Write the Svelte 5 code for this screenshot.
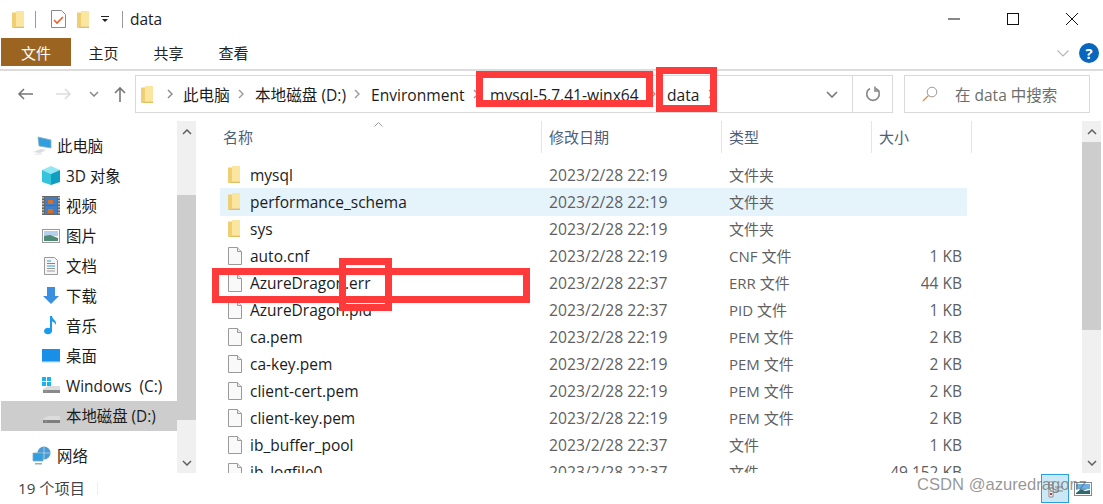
<script>
  const nav = [
    { icon: 'pc', label: '此电脑', indent: 31 },
    { icon: 'cube', label: '3D 对象', indent: 40 },
    { icon: 'film', label: '视频', indent: 40 },
    { icon: 'pic', label: '图片', indent: 40 },
    { icon: 'doc', label: '文档', indent: 40 },
    { icon: 'down', label: '下载', indent: 40 },
    { icon: 'music', label: '音乐', indent: 40 },
    { icon: 'desk', label: '桌面', indent: 40 },
    { icon: 'win', label: 'Windows  (C:)', indent: 40 },
    { icon: 'disk', label: '本地磁盘 (D:)', indent: 40, selected: true },
    { icon: 'net', label: '网络', indent: 31, gap: true }
  ];
  const files = [
    ['folder', 'mysql', '2023/2/28 22:19', '文件夹', ''],
    ['folder', 'performance_schema', '2023/2/28 22:19', '文件夹', ''],
    ['folder', 'sys', '2023/2/28 22:19', '文件夹', ''],
    ['file', 'auto.cnf', '2023/2/28 22:19', 'CNF 文件', '1 KB'],
    ['file', 'AzureDragon.err', '2023/2/28 22:37', 'ERR 文件', '44 KB'],
    ['file', 'AzureDragon.pid', '2023/2/28 22:37', 'PID 文件', '1 KB'],
    ['file', 'ca.pem', '2023/2/28 22:19', 'PEM 文件', '2 KB'],
    ['file', 'ca-key.pem', '2023/2/28 22:19', 'PEM 文件', '2 KB'],
    ['file', 'client-cert.pem', '2023/2/28 22:19', 'PEM 文件', '2 KB'],
    ['file', 'client-key.pem', '2023/2/28 22:19', 'PEM 文件', '2 KB'],
    ['file', 'ib_buffer_pool', '2023/2/28 22:37', '文件', '1 KB'],
    ['file', 'ib_logfile0', '2023/2/28 22:37', '文件', '49,152 KB']
  ];
  const crumbs = [
    { t: '此电脑', w: 72 },
    { t: '本地磁盘 (D:)', w: 116 },
    { t: 'Environment', w: 119 },
    { t: 'mysql-5.7.41-winx64', w: 177 },
    { t: 'data', w: 58 }
  ];
</script>

{#snippet folder()}
  <svg class="fold" viewBox="0 0 12 17">
    <path d="M0 1.500h4v14l-4 1.500z" fill="#f0cf72"/>
    <path d="M4 0h8v15.500H4z" fill="#fbe6a0"/>
    <path d="M0 17l4-1.500h8V17z" fill="#e3bd60"/>
  </svg>
{/snippet}

{#snippet file()}
  <svg class="doc" viewBox="0 0 14 18">
    <path d="M.5.500h9l4 4v13H.5z" fill="#f9f9f9" stroke="#9a9a9a"/>
    <path d="M9.500.500v4h4" fill="#e8e8e8" stroke="#9a9a9a"/>
  </svg>
{/snippet}

{#snippet navIcon(name)}
  <svg class="ic20" viewBox="0 0 20 20">
    {#if name === 'pc'}
      <path d="M6 1l13 3v8L7 10z" fill="#2f9fe0" stroke="#8faec2" stroke-width=".8"/>
      <path d="M1 16l8-3 5 1-6 3z" fill="#d8dde0"/>
      <path d="M2 18l7-1 2 1-6 1z" fill="#e6e8ea"/>
    {:else if name === 'cube'}
      <path d="M1 4l9-4 9 4-9 4z" fill="#8fe8f2"/>
      <path d="M1 4l9 4v11l-9-3z" fill="#35c4dc"/>
      <path d="M19 4l-9 4v11l9-3z" fill="#0f9fc0"/>
    {:else if name === 'film'}
      <rect x="1" y="0" width="18" height="19" fill="#666"/>
      <path d="M2 1v17M18 1v17" stroke="#ddd" stroke-width="1.400" stroke-dasharray="1.500 1.500"/>
      <rect x="4" y="1" width="12" height="8" fill="#3f7fc8"/>
      <rect x="4" y="10" width="12" height="8" fill="#3f7fc8"/>
      <path d="M7 4h5v4H7zM7 13h5v4H7z" fill="#d0702a"/>
    {:else if name === 'pic'}
      <rect x="1.500" y="3.500" width="17" height="13" fill="#fff" stroke="#9a9a9a"/>
      <rect x="3" y="5" width="14" height="5" fill="#b5d0ea"/>
      <path d="M3 10l6-1 8 3v3H3z" fill="#4d8b74"/>
    {:else if name === 'doc'}
      <path d="M3.500 1.500h10l3 3v14h-13z" fill="#f6f6f6" stroke="#9a9a9a"/>
      <path d="M6 5h4M6 7.500h8M6 10h8" stroke="#2f9fe0"/>
      <path d="M6 12.500h8M6 15h8" stroke="#999"/>
    {:else if name === 'down'}
      <path d="M6 1h8v9h4l-8 8-8-8h4z" fill="#3b8fe0"/>
    {:else if name === 'music'}
      <path d="M9 0h2c.5 4 5 4 4 9-.8-2-2-3-4-3.500V15a4 3.200 0 1 1-2-2.700z" fill="#1a9bec"/>
    {:else if name === 'desk'}
      <rect x="1" y="3" width="18" height="13" fill="#1a8fe8"/>
      <path d="M1 15.500h18V17H1z" fill="#d6ecfb"/>
    {:else if name === 'win'}
      <path d="M1 1h4v4H1zM6 1h4v4H6zM1 6h4v4H1zM6 6h4v4H6z" fill="#19b3f0"/>
      <path d="M2 13l5-3h12v4H2z" fill="#dcdcdc"/>
      <path d="M2 14h17v3H2z" fill="#8a8a8a"/>
      <rect x="4" y="15" width="2" height="1" fill="#4fd04f"/>
    {:else if name === 'disk'}
      <path d="M2 13l5-3h12v4H2z" fill="#dcdcdc"/>
      <path d="M2 14h17v3H2z" fill="#7d7d7d"/>
      <rect x="4" y="15" width="2" height="1" fill="#4fd04f"/>
    {:else if name === 'net'}
      <circle cx="12" cy="7" r="6.500" fill="#4a9ad4"/>
      <path d="M12 .5v13M5.500 7h13" stroke="#bfe0f5" stroke-width=".7"/>
      <path d="M1 7h10v8H1z" fill="#2f9fe0" stroke="#8ab" stroke-width=".8"/>
      <path d="M3 17h7v1.500H3z" fill="#9ab"/>
    {/if}
  </svg>
{/snippet}

<div class="window">
  <header class="title">
    <span class="t-folder">{@render folder()}</span>
    <i class="sep"></i>
    <svg class="t-check" viewBox="0 0 15 18">
      <path d="M.5.500h10l4 4v13H.5z" fill="#fff" stroke="#8a8a8a"/>
      <path d="M3 10l3 3 6-6" fill="none" stroke="#e8602c" stroke-width="1.600"/>
    </svg>
    <span class="t-folder2">{@render folder()}</span>
    <svg class="t-drop" viewBox="0 0 9 8"><path d="M0 1h8v1H0zM1 4h6L4 7z" fill="#222"/></svg>
    <i class="sep sep2"></i>
    <span class="t-name">data</span>
    <div class="controls">
      <svg viewBox="0 0 14 14"><path d="M1 7h12" stroke="#111" stroke-width="1"/></svg>
      <svg viewBox="0 0 14 14"><rect x="1.500" y="1.500" width="11" height="11" fill="none" stroke="#111"/></svg>
      <svg viewBox="0 0 14 14"><path d="M1 1l12 12M13 1L1 13" stroke="#111" stroke-width="1"/></svg>
    </div>
  </header>

  <nav class="ribbon">
    <span class="tab file-tab">文件</span>
    <span class="tab">主页</span>
    <span class="tab">共享</span>
    <span class="tab">查看</span>
    <div class="ribbon-right">
      <svg class="r-chev" viewBox="0 0 12 7"><path d="M.5.500L6 6 11.500.5" fill="none" stroke="#b5b5b5" stroke-width="1.100"/></svg>
      <span class="help">?</span>
    </div>
  </nav>

  <div class="addressbar">
    <div class="navbtns">
      <svg class="b-back" viewBox="0 0 16 14"><path d="M16 7H2M7 2L2 7l5 5" fill="none" stroke="#777" stroke-width="1.600"/></svg>
      <svg class="b-fwd" viewBox="0 0 16 14"><path d="M0 7h14M9 2l5 5-5 5" fill="none" stroke="#ddd" stroke-width="1.600"/></svg>
      <svg class="b-drop" viewBox="0 0 10 6"><path d="M1 1l4 4 4-4" fill="none" stroke="#888" stroke-width="1.500"/></svg>
      <svg class="b-up" viewBox="0 0 14 16"><path d="M7 16V2M2 7l5-5 5 5" fill="none" stroke="#777" stroke-width="1.600"/></svg>
    </div>
    <div class="addr">
      <span class="a-folder">{@render folder()}</span>
      <svg class="chev first" viewBox="0 0 6 10"><path d="M1 1l4 4-4 4" fill="none" stroke="#888" stroke-width="1.400"/></svg>
      {#each crumbs as c}
        <span class="crumb" style="width:{c.w}px"><span class="c-text">{c.t}</span><svg class="chev" viewBox="0 0 6 10"><path d="M1 1l4 4-4 4" fill="none" stroke="#999" stroke-width="1.400"/></svg></span>
      {/each}
      <svg class="a-drop" viewBox="0 0 12 7"><path d="M1 1l5 5 5-5" fill="none" stroke="#777" stroke-width="1.600"/></svg>
      <span class="a-refresh">
        <svg viewBox="0 0 16 16"><path d="M5 2.500a6.300 6.300 0 1 0 6 0" fill="none" stroke="#888" stroke-width="1.600"/><path d="M10 .5v4.500h4.500" fill="none" stroke="#888" stroke-width="1.600"/></svg>
      </span>
    </div>
    <div class="search">
      <svg viewBox="0 0 16 16"><circle cx="10" cy="6" r="4.800" fill="none" stroke="#999"/><path d="M6.500 9.500L1 15" stroke="#c9924a" stroke-width="1.200"/></svg>
      <span class="s-text">在 data 中搜索</span>
    </div>
  </div>

  <div class="body">
    <aside class="side">
      <div class="side-list">
        {#each nav as n}
          <div class="nav-row" class:selected={n.selected} class:gap={n.gap} style="padding-left:{n.indent}px">
            {@render navIcon(n.icon)}
            <span class="n-text">{n.label}</span>
          </div>
        {/each}
      </div>
      <div class="scroll">
        <span class="sb-btn tall"><svg viewBox="0 0 10 6"><path d="M1 5l4-4 4 4" fill="none" stroke="#606060" stroke-width="1.500"/></svg></span>
        <span class="sb-thumb s1"></span>
        <span class="sb-rest"></span>
        <span class="sb-btn end"><svg viewBox="0 0 10 6"><path d="M1 1l4 4 4-4" fill="none" stroke="#606060" stroke-width="1.500"/></svg></span>
      </div>
    </aside>

    <main class="main">
      <div class="content">
        <div class="cols">
          <span class="h h1">名称<svg class="sort" viewBox="0 0 9 5"><path d="M.5 4.500l4-4 4 4" fill="none" stroke="#999"/></svg></span>
          <span class="h h2">修改日期</span>
          <span class="h h3">类型</span>
          <span class="h h4">大小</span>
        </div>
        <div class="rows">
          {#each files as f, i}
            <div class="row" class:hover={i === 1}>
              <span class="r-icon">{#if f[0] === 'folder'}{@render folder()}{:else}{@render file()}{/if}</span>
              <span class="r-name">{f[1]}</span>
              <span class="r-meta r-date">{f[2]}</span>
              <span class="r-meta">{f[3]}</span>
              <span class="r-meta r-size">{f[4]}</span>
            </div>
          {/each}
        </div>
      </div>
      <div class="scroll main-scroll">
        <span class="sb-btn"><svg viewBox="0 0 10 6"><path d="M1 5l4-4 4 4" fill="none" stroke="#606060" stroke-width="1.500"/></svg></span>
        <span class="sb-thumb s2"></span>
        <span class="sb-rest"></span>
        <span class="sb-btn end"><svg viewBox="0 0 10 6"><path d="M1 1l4 4 4-4" fill="none" stroke="#606060" stroke-width="1.500"/></svg></span>
      </div>
    </main>
  </div>

  <footer class="status">
    <span class="count">19 个项目</span>
    <i class="s-sep"></i>
    <span class="views">
      <span class="v-btn">
        <svg viewBox="0 0 20 20"><path d="M4 3h4v15H4z" fill="#fff" stroke="#888"/><path d="M5 6h2M5 9h2M5 12h2" stroke="#555"/><rect x="5" y="14" width="2" height="2" fill="#c33"/><path d="M10 8h8M10 12h8" stroke="#888"/></svg>
      </span>
      <svg class="v-large" viewBox="0 0 18 14"><rect x=".5" y=".5" width="17" height="13" fill="#fff" stroke="#888"/><rect x="2" y="2" width="14" height="5" fill="#6ab0e8"/><path d="M2 11l5-4 4 2 5-1v4H2z" fill="#2c6a70"/></svg>
    </span>
  </footer>

  <i class="mark m1"></i>
  <i class="mark m2"></i>
  <i class="mark m3"></i>
  <i class="mark m4"></i>
  <span class="watermark">CSDN @azuredragonz</span>
</div>

<style>
  :global(body) { margin: 0; background: #fff; }
  .window {
    position: relative;
    width: 1103px;
    height: 504px;
    overflow: hidden;
    background: #fff;
    color: #1c1c1c;
    font: 15px/20px "Open Sans", "Noto Sans CJK SC", sans-serif;
    display: flex;
    flex-direction: column;
  }
  svg { display: block; flex: none; }
  .fold { width: 12px; height: 17px; }
  .doc { width: 14px; height: 18px; }
  .ic20 { width: 20px; height: 20px; }

  .title { height: 38px; display: flex; align-items: center; padding: 0 0 0 12px; box-sizing: border-box; flex: none; }
  .sep { width: 1px; height: 17px; background: #9a9a9a; margin-left: 11px; margin-right: 15px; }
  .t-check { width: 15px; height: 18px; margin-right: 11px; }
  .t-drop { width: 9px; height: 8px; margin-left: 12px; }
  .sep2 { margin-left: 12px; margin-right: 7px; }
  .t-name { font-size: 15.5px; }
  .controls { margin-left: auto; display: flex; margin-right: 24px; gap: 45px; }
  .controls svg { width: 14px; height: 14px; }

  .ribbon { height: 31px; display: flex; align-items: flex-start; border-bottom: 2px solid #dcdcdc; flex: none; padding-left: 1px; }
  .tab { width: 65px; height: 28px; line-height: 30px; text-align: center; color: #222; }
  .file-tab { width: 70px; background: #9b6420; color: #fff; }
  .ribbon-right { margin-left: auto; display: flex; align-items: center; gap: 10px; margin-right: 4px; height: 30px; }
  .r-chev { width: 12px; height: 7px; }
  .help { width: 20px; height: 20px; border-radius: 50%; background: #0867bd; color: #fff; font-weight: 700; font-size: 15px; text-align: center; line-height: 20px; }

  .addressbar { height: 38px; margin-top: 4px; display: flex; flex: none; }
  .navbtns { width: 135px; display: flex; align-items: center; padding-left: 17px; box-sizing: border-box; }
  .b-back, .b-fwd { width: 16px; height: 14px; }
  .b-fwd { margin-left: 23px; }
  .b-drop { width: 10px; height: 6px; margin-left: 17px; }
  .b-up { width: 14px; height: 16px; margin-left: 14px; }
  .addr { width: 758px; box-sizing: border-box; border: 1px solid #d9d9d9; display: flex; align-items: center; padding-left: 5px; }
  .a-folder { width: 12px; }
  .chev { width: 6px; height: 10px; }
  .chev.first { margin: 0 10px 0 14px; }
  .crumb { display: flex; align-items: center; justify-content: space-between; padding-right: 11px; box-sizing: border-box; white-space: nowrap; flex: none; }
  .c-text { font-size: 15.6px; padding-top: 1px; }
  .a-drop { width: 12px; height: 7px; margin-left: auto; margin-right: 14px; }
  .a-refresh { width: 39px; height: 100%; border-left: 1px solid #d9d9d9; display: flex; align-items: center; justify-content: center; }
  .a-refresh svg { width: 16px; height: 16px; }
  .search { width: 186px; margin-left: 11px; box-sizing: border-box; border: 1px solid #d9d9d9; display: flex; align-items: center; padding-left: 17px; gap: 17px; color: #6d6d6d; }
  .search svg { width: 16px; height: 16px; }
  .s-text { font-size: 15.5px; padding-top: 1px; }

  .body { flex: 1; display: flex; min-height: 0; margin-top: 8px; }
  .side { width: 220px; display: flex; flex: none; }
  .side-list { width: 177px; padding-top: 10px; box-sizing: border-box; flex: none; }
  .nav-row { height: 30px; display: flex; align-items: center; gap: 5px; white-space: pre; margin-left: 1px; }
  .n-text { font-size: 15.4px; padding-top: 1px; }
  .nav-row.gap { margin-top: 10px; }
  .nav-row.selected { background: #cdcdcd; }
  .scroll { width: 19px; height: 352px; display: flex; flex-direction: column; background: #f0f0f0; flex: none; }
  .sb-btn { height: 21px; display: flex; align-items: center; justify-content: center; flex: none; }
  .sb-btn svg { width: 10px; height: 6px; }
  .sb-btn.tall { height: 74px; align-items: flex-start; padding-top: 8px; box-sizing: border-box; }
  .sb-thumb { background: #cdcdcd; flex: none; }
  .s1 { height: 225px; }
  .s2 { height: 188px; }
  .sb-rest { flex: 1; }

  .main { flex: 1; display: flex; min-width: 0; }
  .content { width: 862px; flex: none; min-width: 0; }
  .cols { height: 32px; display: flex; color: #4c607a; }
  .h { border-right: 1px solid #e5e5e5; box-sizing: border-box; padding-left: 3px; line-height: 32px; position: relative; }
  .h1 { width: 322px; }
  .h2 { width: 180px; padding-left: 7px; }
  .h3 { width: 150px; padding-left: 7px; }
  .h4 { width: 100px; padding-left: 7px; }
  .sort { position: absolute; left: 154px; top: 1px; width: 9px; height: 5px; }
  .rows { height: 320px; overflow: hidden; padding-top: 8px; box-sizing: border-box; }
  .row { width: 747px; height: 27px; display: grid; grid-template-columns: 30px 299px 180px 143px 90px; align-items: center; white-space: nowrap; }
  .row.hover { background: #e5f3fb; box-shadow: 0 1px 0 #e5f3fb; }
  .r-icon { padding-left: 8px; }
  .r-name { font-size: 15.5px; }
  .r-meta { color: #5f5f5f; }
  .r-date { font-size: 15.7px; }
  .r-size { text-align: right; font-size: 15.5px; }

  .status { height: 31px; flex: none; display: flex; align-items: center; color: #444; }
  .count { margin-left: 18px; font-size: 15.2px; margin-bottom: 2px; }
  .s-sep { width: 1px; height: 13px; background: #eee; margin-left: 12px; }
  .views { margin-left: auto; display: flex; align-items: center; margin-right: 11px; }
  .v-btn { width: 28px; height: 29px; box-sizing: border-box; border: 1px solid #2a9fdc; background: #cbe8f6; display: flex; align-items: center; justify-content: center; }
  .v-btn svg { width: 20px; height: 20px; }
  .v-large { width: 18px; height: 14px; margin-left: 5px; }

  .mark { position: absolute; border: 7px solid #ff3a3a; box-sizing: border-box; }
  .m1 { left: 476px; top: 71px; width: 177px; height: 36px; }
  .m2 { left: 656px; top: 67px; width: 61px; height: 45px; }
  .m3 { left: 212px; top: 268px; width: 318px; height: 35px; }
  .m4 { left: 339px; top: 258px; width: 53px; height: 53px; }
  .watermark { position: absolute; left: 917px; top: 475px; font: 16.6px/20px "Liberation Sans", sans-serif; color: rgba(110, 110, 110, .72); white-space: nowrap; }
</style>
